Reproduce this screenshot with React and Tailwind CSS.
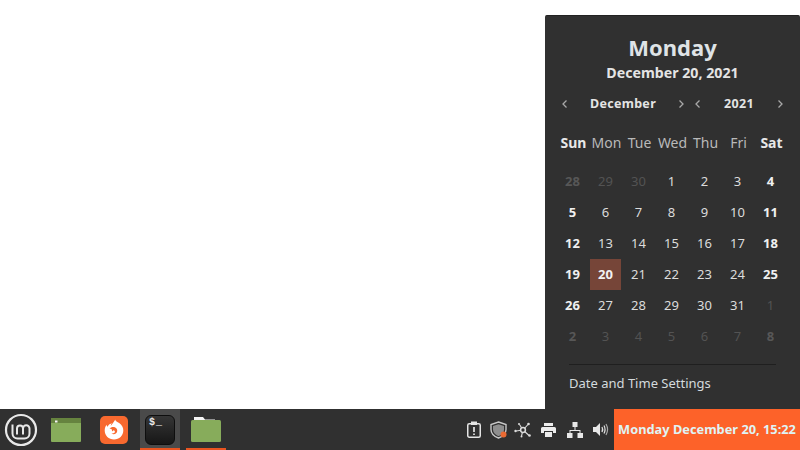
import React from 'react';

const weeks = [
  [['28', 'o'], ['29', 'm'], ['30', 'm'], ['1'], ['2'], ['3'], ['4', 'b']],
  [['5', 'b'], ['6'], ['7'], ['8'], ['9'], ['10'], ['11', 'b']],
  [['12', 'b'], ['13'], ['14'], ['15'], ['16'], ['17'], ['18', 'b']],
  [['19', 'b'], ['20', 't'], ['21'], ['22'], ['23'], ['24'], ['25', 'b']],
  [['26', 'b'], ['27'], ['28'], ['29'], ['30'], ['31'], ['1', 'm']],
  [['2', 'o'], ['3', 'm'], ['4', 'm'], ['5', 'm'], ['6', 'm'], ['7', 'm'], ['8', 'o']],
];

const dayClass = {
  o: 'font-bold text-[#575757]',
  m: 'text-[#535353]',
  b: 'font-bold text-[#f0f0f0]',
  t: 'font-bold text-[#f2f2f2] bg-[#764538]',
};

function Chevron({ dir }) {
  return (
    <svg width="8" height="10" viewBox="0 0 8 10" fill="none" stroke="#a8a8a8" strokeWidth="1.3">
      <path d={dir === 'left' ? 'M5.5 1.5 2 5l3.5 3.5' : 'M2.5 1.5 6 5 2.5 8.5'} />
    </svg>
  );
}

function Stepper({ label, className }) {
  return (
    <div className={`flex items-center justify-between ${className}`}>
      <Chevron dir="left" />
      <span className="text-[12.5px] font-bold tracking-[0.3px] text-[#e4e4e4]">{label}</span>
      <Chevron dir="right" />
    </div>
  );
}

function Calendar() {
  return (
    <div className="w-[255px] h-full bg-[#303030] rounded-t-[2px] flex flex-col border-t border-[#222]">
      <div className="pt-[16px] text-center text-[22px] leading-[30px] font-bold text-[#dfe3e6]">Monday</div>
      <div className="text-center text-[14.2px] leading-[21px] font-bold text-[#e4e4e4]">December 20, 2021</div>

      <div className="flex pl-[16px] pr-[16px] mt-[11px] h-[20px]">
        <Stepper label="December" className="w-[124px]" />
        <Stepper label="2021" className="w-[90px] ml-auto" />
      </div>

      <div className="grid grid-cols-[repeat(7,33px)] pl-[12px] mt-[19px] text-[14px] leading-[20px] text-center text-[#b9b9b9]">
        <span className="font-bold text-[#e8e8e8]">Sun</span>
        <span>Mon</span>
        <span>Tue</span>
        <span>Wed</span>
        <span>Thu</span>
        <span>Fri</span>
        <span className="font-bold text-[#e8e8e8]">Sat</span>
      </div>

      <div className="grid grid-cols-[repeat(7,33px)] auto-rows-[31px] px-[11px] mt-[13px] text-[13px] text-center text-[#dcdcdc]">
        {weeks.flat().map(([n, kind], i) => (
          <span
            key={i}
            className={`flex items-center justify-center ${kind === 't' ? 'mx-[1px]' : ''} ${kind ? dayClass[kind] : ''}`}
          >
            {n}
          </span>
        ))}
      </div>

      <div className="mx-[24px] mt-[12px] border-t border-[#1f1f1f]" />
      <div className="px-[24px] mt-[9px] text-[13px] leading-[18px] text-[#d4dadd]">Date and Time Settings</div>
    </div>
  );
}

function MintLogo() {
  return (
    <svg width="34" height="34" viewBox="0 0 34 34" fill="none" stroke="#e8e8e8">
      <circle cx="17" cy="17" r="15" strokeWidth="2.2" />
      <path d="M8.500 11.500v9a5 5 0 0 0 5 5h7a5 5 0 0 0 5-5v-5a3.250 3.250 0 0 0-6.500 0v6M19 15.500a3 3 0 0 0-6 0v6" strokeWidth="2" />
    </svg>
  );
}

function WindowIcon() {
  return (
    <svg width="30" height="24" viewBox="0 0 30 24">
      <rect x="0" y="0" width="30" height="24" rx="1" fill="#87ac5b" />
      <rect x="0" y="0" width="30" height="5" fill="#66833f" />
      <rect x="4" y="2.500" width="2.500" height="2" fill="#f4f4f4" />
    </svg>
  );
}

function FirefoxIcon() {
  return (
    <svg width="28" height="28" viewBox="0 0 28 28">
      <rect width="28" height="28" rx="5" fill="#f8692f" />
      <path d="M15 3.500c.6 2 3 2.600 4.500 3.800C22 9.300 23.300 11.500 23.300 14.500c0 5-4 9-9.300 9s-9.300-4-9.300-9c0-2.500.8-4.300 1.800-5.700.2 1 .5 1.600 1 2 .8-2 2.800-3.200 4.500-3.500-.8.800-1.300 1.700-1.300 2.400 1.200-.6 2-2.500 4.300-5.700z" fill="#fff" />
      <path d="M9.500 12.500c1.500-1.800 5-2.300 6.800-.3 1.500 1.600 1.200 4.200-.5 5.300-1.500 1-3.300.8-4.300-.2 1.500.4 2.800 0 3.300-1 .4-1-.2-1.800-1.300-2.100l-1.300 1.300-.5-2.300c-.8-.4-1.500-.6-2.200-.7z" fill="#f8692f" />
    </svg>
  );
}

function TerminalIcon() {
  return (
    <div className="relative w-[30px] h-[30px] rounded-[6px] bg-gradient-to-b from-[#363636] to-[#171717] border border-[#0e0e0e]">
      <span className="absolute left-[3px] top-[1px] text-[10px] leading-[12px] font-bold tracking-[1px] text-[#eee]" style={{ fontFamily: '"Liberation Mono", monospace' }}>$_</span>
    </div>
  );
}

function FolderIcon() {
  return (
    <svg width="30" height="25" viewBox="0 0 30 25">
      <path d="M3 0h9l2 2.500h10v5H3z" fill="#f4f4f4" />
      <rect x="0" y="3" width="30" height="22" rx="1.500" fill="#87ac5b" />
    </svg>
  );
}

function TrayIcons() {
  return (
    <div className="flex items-center text-[#e4e4e4]">
      <svg width="16" height="17" viewBox="0 0 16 17" fill="none" stroke="currentColor" strokeWidth="1.500">
        <rect x="1.750" y="2.750" width="12.500" height="13.500" rx="1.500" />
        <rect x="5" y="0.500" width="6" height="3.500" fill="currentColor" stroke="none" />
        <path d="M8 6v5M8 12.500v1.500" strokeWidth="1.700" />
      </svg>
      <svg width="18" height="18" viewBox="0 0 18 18" className="ml-[8px]">
        <path d="M8.500 1 16 3.500v5c0 4-3.200 7-7.500 8.500C4.200 15.500 1 12.500 1 8.500v-5z" fill="none" stroke="#c8c8c8" strokeWidth="1.400" />
        <path d="M8.500 3.200 14 5v3.700c0 3-2.300 5-5.500 6.500-3.200-1.500-5.500-3.500-5.500-6.500V5z" fill="#8e8e8e" />
        <circle cx="13.500" cy="13.500" r="3" fill="#ea6a33" />
      </svg>
      <svg width="18" height="18" viewBox="0 0 18 18" fill="none" stroke="#dcdcdc" strokeWidth="1.100" className="ml-[6px]">
        <path d="M9 9 14 3.500M9 9l-7 1M9 9l6 5.500M9 9 5.500 3.500M9 9l-1.500 6" />
        <circle cx="9" cy="9" r="2.400" fill="#303030" strokeWidth="1.500" />
        <circle cx="14.500" cy="3" r="1.300" fill="#dcdcdc" stroke="none" />
        <circle cx="1.500" cy="10" r="1.200" fill="#dcdcdc" stroke="none" />
        <circle cx="15.500" cy="14.500" r="1.300" fill="#dcdcdc" stroke="none" />
        <circle cx="5" cy="3" r="1" fill="#dcdcdc" stroke="none" />
        <circle cx="7.500" cy="15.500" r="1" fill="#dcdcdc" stroke="none" />
      </svg>
      <svg width="15" height="14" viewBox="0 0 15 14" fill="#ececec" className="ml-[9px]">
        <rect x="3" y="0" width="9" height="3" />
        <path d="M1.500 4h12A1.500 1.500 0 0 1 15 5.500V10h-3V8H3v2H0V5.500A1.500 1.500 0 0 1 1.500 4z" />
        <rect x="4" y="9" width="7" height="5" />
      </svg>
      <svg width="16" height="16" viewBox="0 0 16 16" fill="#e8e8e8" className="ml-[11px]">
        <rect x="5.500" y="0" width="5" height="5" />
        <rect x="0" y="11" width="5.500" height="5" />
        <rect x="10.500" y="11" width="5.500" height="5" />
        <path d="M7.500 5h1v3h5v3h-1V9h-9v2h-1V8h5z" />
      </svg>
      <svg width="16" height="15" viewBox="0 0 16 14" fill="none" stroke="#e0e0e0" className="ml-[10px]">
        <path d="M0 4.500h3L7 .5v13l-4-4H0z" fill="#e8e8e8" stroke="none" />
        <path d="M9 4.500c.8 1.500.8 3.500 0 5" strokeWidth="1.300" />
        <path d="M11 3c1.300 2.500 1.300 5.500 0 8" strokeWidth="1.200" />
        <path d="M13 1.500c2 3.500 2 7.500 0 11" strokeWidth="1.200" stroke="#a8a8a8" />
      </svg>
    </div>
  );
}

function Launcher({ active, running, children, width, className = '' }) {
  return (
    <div className={`relative h-full flex items-center justify-center ${width} ${active ? 'bg-[#4a4a4a]' : ''} ${className}`}>
      {children}
      {running && <div className="absolute left-0 right-0 bottom-0 h-[2px] bg-[#e95420]" />}
    </div>
  );
}

export default function App() {
  return (
    <div className="w-[800px] h-[450px] flex flex-col bg-white overflow-hidden" style={{ fontFamily: '"Noto Sans", sans-serif' }}>
      <div className="flex-1 min-h-0 flex justify-end pt-[15px]">
        <Calendar />
      </div>

      <div className="h-[41px] bg-[#303030] flex items-center">
        <div className="w-[42px] flex justify-center"><MintLogo /></div>
        <Launcher width="w-[48px]"><WindowIcon /></Launcher>
        <Launcher width="w-[48px]"><FirefoxIcon /></Launcher>
        <Launcher width="w-[40px]" active running className="ml-[2px]"><TerminalIcon /></Launcher>
        <Launcher width="w-[40px]" running className="ml-[6px]"><FolderIcon /></Launcher>
        <div className="flex-1" />
        <TrayIcons />
        <div className="ml-[5px] w-[186px] h-full bg-[#fd6229] flex items-center justify-center text-[12.8px] font-bold text-[#dff4f5] whitespace-nowrap">
          Monday December 20, 15:22
        </div>
      </div>
    </div>
  );
}
